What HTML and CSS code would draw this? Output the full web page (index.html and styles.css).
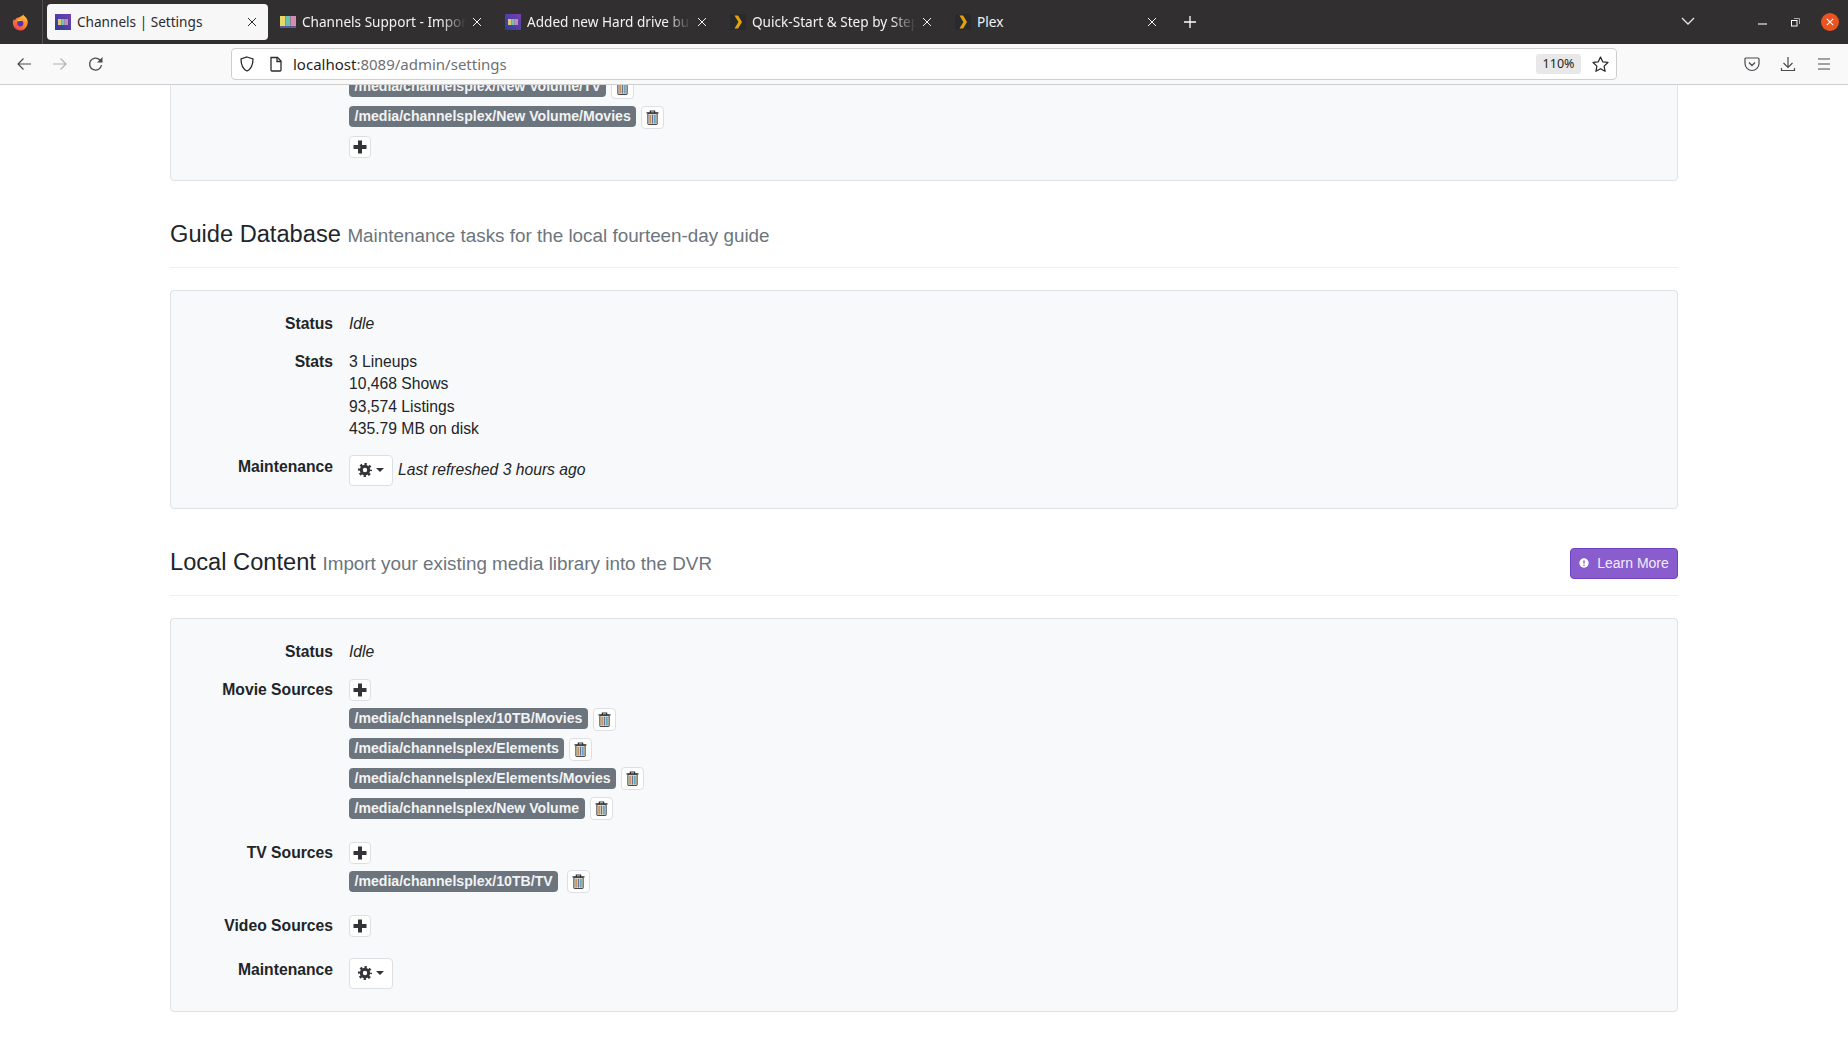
FILE: index.html
```html
<!DOCTYPE html>
<html lang="en">
<head>
<meta charset="utf-8">
<title>Channels | Settings</title>
<link rel="stylesheet" href="styles.css">
</head>
<body>
<svg class="defs" width="0" height="0" aria-hidden="true">
  <symbol id="i-x" viewBox="0 0 10 10"><path d="M1 1l8 8M9 1l-8 8" fill="none" stroke="currentColor" stroke-width="1"/></symbol>
  <symbol id="i-tv" viewBox="0 0 16 16"><rect x="0" y="2" width="16" height="12" fill="#2b2b2b"/><rect x="0" y="2" width="5.5" height="10" fill="#e8d86a"/><rect x="5.5" y="2" width="5" height="10" fill="#6cc0b0"/><rect x="10.5" y="2" width="5.5" height="10" fill="#d88ab0"/><rect x="0" y="12" width="16" height="2" fill="#5a5a9a"/></symbol>
  <symbol id="i-channels" viewBox="0 0 16 16"><defs><linearGradient id="g-ch" x1="0" y1="1" x2="1" y2="0"><stop offset="0" stop-color="#2a3f9a"/><stop offset="1" stop-color="#7a3fb0"/></linearGradient></defs><rect width="16" height="16" fill="url(#g-ch)"/><rect x="3" y="5" width="3.4" height="6" fill="#d8c878"/><rect x="6.4" y="5" width="3.2" height="6" fill="#7cc0b0"/><rect x="9.6" y="5" width="3.4" height="6" fill="#c88ab0"/></symbol>
  <symbol id="i-plex" viewBox="0 0 16 16"><rect width="16" height="16" fill="#282a2d"/><path d="M4.5 1.5h3.6L12 8l-3.9 6.500H4.500L8.400 8z" fill="#e5a00d"/></symbol>
  <symbol id="i-plus" viewBox="0 0 14 14"><path d="M7 .5v13M.5 7h13" fill="none" stroke="#33343a" stroke-width="4"/></symbol>
  <symbol id="i-trash" viewBox="0 0 14 16"><path d="M0.500 3h13M4.700 3V1h4.600v2" fill="none" stroke="#2f3036" stroke-width="1.300"/><path d="M2 3.600h10V15a.6.6 0 0 1-.6.600H2.600a.6.6 0 0 1-.6-.600z" fill="#e6e0cf" stroke="#2f3036" stroke-width="1"/><path d="M4.400 5v9.500" stroke="#c4864a" stroke-width="1.600"/><path d="M7 5v9.500" stroke="#66748e" stroke-width="1.600"/><path d="M9.600 5v9.500" stroke="#4f9cc4" stroke-width="1.600"/></symbol>
  <symbol id="i-gear" viewBox="0 0 14 14"><circle cx="7" cy="7" r="3.700" fill="none" stroke="#33343a" stroke-width="3"/><circle cx="7" cy="7" r="5.800" fill="none" stroke="#33343a" stroke-width="2.400" stroke-dasharray="2.300 2.250" stroke-dashoffset="1.150"/></symbol>
</svg>

<header class="tabbar">
  <div class="ff-box">
    <svg class="ff" viewBox="0 0 16 16" width="17" height="17"><defs><linearGradient id="g-ff" x1="0.800" y1="0" x2="0.200" y2="1"><stop offset="0" stop-color="#ffc83a"/><stop offset="0.550" stop-color="#ff7a2c"/><stop offset="1" stop-color="#ee3a5e"/></linearGradient></defs><path d="M10.500 .5c.6 1.400 2 2 3 3.300 1.500 2 1.700 4.800.7 7C13 13.700 10.800 15.500 8 15.500 3.800 15.500.8 12.300.8 8.500c0-1.500.4-3 1.200-4 0 1 .3 1.500.7 1.800C3.300 4.300 5 3.300 6.500 3.300 8 2.500 10 2 10.500.5z" fill="url(#g-ff)"/><circle cx="7.800" cy="8.800" r="2.900" fill="#5b2fb5"/><path d="M5 6c1.500-1 4-1 5 .5-1.500-.4-3-.3-3.700.4L5 6z" fill="#ffcf50"/></svg>
  </div>
  <div class="tab tab-active">
    <svg class="fav"><use href="#i-channels"/></svg><span class="tab-title">Channels | Settings</span><svg class="tab-x"><use href="#i-x"/></svg>
  </div>
  <div class="tab">
    <svg class="fav"><use href="#i-tv"/></svg><span class="tab-title tab-fade">Channels Support - Importing media</span><svg class="tab-x"><use href="#i-x"/></svg>
  </div>
  <div class="tab">
    <svg class="fav"><use href="#i-channels"/></svg><span class="tab-title tab-fade">Added new Hard drive but not showing</span><svg class="tab-x"><use href="#i-x"/></svg>
  </div>
  <div class="tab">
    <svg class="fav"><use href="#i-plex"/></svg><span class="tab-title tab-fade">Quick-Start &amp; Step by Step guide</span><svg class="tab-x"><use href="#i-x"/></svg>
  </div>
  <div class="tab">
    <svg class="fav"><use href="#i-plex"/></svg><span class="tab-title">Plex</span><svg class="tab-x"><use href="#i-x"/></svg>
  </div>
  <svg class="newtab" viewBox="0 0 14 14" width="14" height="14"><path d="M7 1v12M1 7h12" fill="none" stroke="#fff" stroke-width="1.300"/></svg>
  <div class="win-controls">
    <svg class="chev" viewBox="0 0 14 8" width="14" height="8"><path d="M1 1l6 6 6-6" fill="none" stroke="#e6e6e6" stroke-width="1.300"/></svg>
    <svg class="win-min" viewBox="0 0 10 2" width="9" height="2"><path d="M0 1h10" stroke="#fff" stroke-width="1.200"/></svg>
    <svg class="win-res" viewBox="0 0 9 9" width="9" height="9"><rect x=".5" y="2.500" width="5.500" height="5.500" fill="none" stroke="#fff"/><path d="M3 .5h5.500V6" fill="none" stroke="#aaa"/></svg>
    <span class="win-close"><svg viewBox="0 0 10 10" width="8" height="8"><path d="M1 1l8 8M9 1l-8 8" stroke="#fff" stroke-width="1.300"/></svg></span>
  </div>
</header>

<nav class="navbar">
  <svg class="nav-icon ni-back" viewBox="0 0 16 16"><path d="M15 8H2M7.500 2.500L2 8l5.500 5.500" fill="none" stroke="#4a4a4f" stroke-width="1.200"/></svg>
  <svg class="nav-icon ni-fwd" viewBox="0 0 16 16"><path d="M1 8h13M8.500 2.500L14 8l-5.500 5.500" fill="none" stroke="#b1b1b3" stroke-width="1.200"/></svg>
  <svg class="nav-icon ni-reload" viewBox="0 0 16 16"><path d="M13.500 9a6 6 0 1 1-1.700-5.200L14 6" fill="none" stroke="#4a4a4f" stroke-width="1.300"/><path d="M14.500 1v5.500H9z" fill="#4a4a4f"/></svg>
  <div class="urlbar">
    <svg class="url-shield" viewBox="0 0 16 16" width="16" height="16"><path d="M8 1l6 2c0 6-1.500 10-6 12C3.500 13 2 9 2 3z" fill="none" stroke="#2b2b2f" stroke-width="1.300"/></svg>
    <svg class="url-page" viewBox="0 0 14 16" width="14" height="16"><path d="M2 1.500h6.500l3.500 3.500v9a1 1 0 0 1-1 1H3a1 1 0 0 1-1-1z" fill="none" stroke="#2b2b2f" stroke-width="1.300"/><path d="M8 1.500V5.500h4" fill="none" stroke="#2b2b2f" stroke-width="1.300"/></svg>
    <span class="url-text">localhost<span class="url-dim">:8089/admin/settings</span></span>
    <span class="zoom-badge">110%</span>
    <svg class="url-star" viewBox="0 0 16 16" width="17" height="17"><path d="M8 1l2.100 4.500 4.900.6-3.600 3.400.9 4.900L8 12l-4.300 2.400.9-4.900L1 6.100l4.900-.6z" fill="none" stroke="#2b2b2f" stroke-width="1.200" stroke-linejoin="round"/></svg>
  </div>
  <svg class="nav-icon ni-pocket" viewBox="0 0 16 16"><path d="M2 2h12a1 1 0 0 1 1 1v4.500a7 7 0 0 1-14 0V3a1 1 0 0 1 1-1z" fill="none" stroke="#4a4a4f" stroke-width="1.200"/><path d="M5 6.500l3 3 3-3" fill="none" stroke="#4a4a4f" stroke-width="1.300"/></svg>
  <svg class="nav-icon ni-down" viewBox="0 0 16 16"><path d="M8 1v10M3.500 7L8 11.500 12.500 7M1.500 12v2.500h13V12" fill="none" stroke="#4a4a4f" stroke-width="1.200"/></svg>
  <svg class="nav-icon ni-menu" viewBox="0 0 16 16"><path d="M2 3h12M2 8h12M2 13h12" fill="none" stroke="#4a4a4f" stroke-width="1.200"/></svg>
</nav>

<main class="content">
  <div class="container">
    <section class="panel panel-clipped">
      <div class="row">
        <div class="label"></div>
        <div class="value">
          <div class="path-line"><span class="badge">/media/channelsplex/New Volume/TV</span><button class="icon-btn"><svg class="ic-trash"><use href="#i-trash"/></svg></button></div>
          <div class="path-line"><span class="badge">/media/channelsplex/New Volume/Movies</span><button class="icon-btn"><svg class="ic-trash"><use href="#i-trash"/></svg></button></div>
          <div class="plus-line plus-below"><button class="icon-btn btn-plus"><svg class="ic-plus"><use href="#i-plus"/></svg></button></div>
        </div>
      </div>
    </section>

    <header class="section-head">
      <h3 class="section-title">Guide Database <small class="section-sub">Maintenance tasks for the local fourteen-day guide</small></h3>
    </header>
    <section class="panel">
      <div class="row">
        <div class="label">Status</div>
        <div class="value"><em>Idle</em></div>
      </div>
      <div class="row">
        <div class="label">Stats</div>
        <div class="value">3 Lineups<br>10,468 Shows<br>93,574 Listings<br>435.79 MB on disk</div>
      </div>
      <div class="row row-maint">
        <div class="label">Maintenance</div>
        <div class="value maint-value">
          <button class="icon-btn btn-gear"><svg class="ic-gear"><use href="#i-gear"/></svg><span class="caret"></span></button>
          <em>Last refreshed 3 hours ago</em>
        </div>
      </div>
    </section>

    <header class="section-head">
      <h3 class="section-title">Local Content <small class="section-sub">Import your existing media library into the DVR</small></h3>
      <a class="btn-learn"><svg viewBox="0 0 10 10" width="10" height="10"><circle cx="5" cy="5" r="4.700" fill="#fff"/><path d="M5 2.500v3" stroke="#8a5dcf" stroke-width="1.500"/><circle cx="5" cy="7.200" r=".8" fill="#8a5dcf"/></svg>Learn More</a>
    </header>
    <section class="panel">
      <div class="row">
        <div class="label">Status</div>
        <div class="value"><em>Idle</em></div>
      </div>
      <div class="row row-source">
        <div class="label">Movie Sources</div>
        <div class="value">
          <div class="plus-line plus-line-tall"><button class="icon-btn btn-plus"><svg class="ic-plus"><use href="#i-plus"/></svg></button></div>
          <div class="path-line"><span class="badge">/media/channelsplex/10TB/Movies</span><button class="icon-btn"><svg class="ic-trash"><use href="#i-trash"/></svg></button></div>
          <div class="path-line"><span class="badge">/media/channelsplex/Elements</span><button class="icon-btn"><svg class="ic-trash"><use href="#i-trash"/></svg></button></div>
          <div class="path-line"><span class="badge">/media/channelsplex/Elements/Movies</span><button class="icon-btn"><svg class="ic-trash"><use href="#i-trash"/></svg></button></div>
          <div class="path-line"><span class="badge">/media/channelsplex/New Volume</span><button class="icon-btn"><svg class="ic-trash"><use href="#i-trash"/></svg></button></div>
        </div>
      </div>
      <div class="row row-source">
        <div class="label">TV Sources</div>
        <div class="value">
          <div class="plus-line"><button class="icon-btn btn-plus"><svg class="ic-plus"><use href="#i-plus"/></svg></button></div>
          <div class="path-line"><span class="badge">/media/channelsplex/10TB/TV</span><button class="icon-btn btn-wide-gap"><svg class="ic-trash"><use href="#i-trash"/></svg></button></div>
        </div>
      </div>
      <div class="row row-source">
        <div class="label">Video Sources</div>
        <div class="value">
          <div class="plus-line"><button class="icon-btn btn-plus"><svg class="ic-plus"><use href="#i-plus"/></svg></button></div>
        </div>
      </div>
      <div class="row row-maint">
        <div class="label">Maintenance</div>
        <div class="value maint-value">
          <button class="icon-btn btn-gear"><svg class="ic-gear"><use href="#i-gear"/></svg><span class="caret"></span></button>
        </div>
      </div>
    </section>
  </div>
</main>
</body>
</html>
```

FILE: styles.css
```css
* { box-sizing: border-box; }
html, body { margin: 0; height: 100%; }
body {
  display: flex;
  flex-direction: column;
  height: 100vh;
  overflow: hidden;
  background: #fff;
  color: #212529;
  font-family: "Liberation Sans", Arial, sans-serif;
  font-size: 15.7px;
  line-height: 22.4px;
}
.defs { position: absolute; }

/* Tab strip */
.tabbar {
  flex: 0 0 44px;
  display: flex;
  align-items: flex-start;
  background: #312f30;
  color: #f3f3f3;
  font-family: "Noto Sans", sans-serif;
  font-size: 13.6px;
}
.ff-box {
  width: 43px;
  height: 44px;
  display: flex;
  align-items: center;
  padding-left: 12px;
  border-right: 1px solid #525051;
}
.tab {
  flex: 0 0 221px;
  min-width: 0;
  height: 36px;
  margin: 4px 4px 0 0;
  padding: 0 9px 0 8px;
  display: flex;
  align-items: center;
}
.tab:nth-child(2) { margin-left: 4px; }
.tab-active {
  background: #f7f7f7;
  color: #2b2b2f;
  border-radius: 4px;
}
.fav { width: 16px; height: 16px; flex: none; margin-right: 6px; }
.tab-title { flex: 1; min-width: 0; white-space: nowrap; overflow: hidden; }
.tab-fade {
  -webkit-mask-image: linear-gradient(to right, #000 85%, transparent 100%);
  mask-image: linear-gradient(to right, #000 85%, transparent 100%);
}
.tab-x { width: 10px; height: 10px; flex: none; margin-left: 6px; margin-right: 2px; }
.newtab { margin: 15px 0 0 11px; }
.win-controls {
  margin-left: auto;
  height: 44px;
  display: flex;
  align-items: center;
  width: 167px;
}
.chev { margin-top: -2px; }
.win-min { margin-left: 63px; margin-top: 3px; }
.win-res { margin-left: 24px; }
.win-close {
  margin-left: 21px;
  width: 18px;
  height: 18px;
  border-radius: 50%;
  background: #e95420;
  display: flex;
  align-items: center;
  justify-content: center;
}

/* Navigation bar */
.navbar {
  flex: 0 0 41px;
  display: flex;
  align-items: center;
  background: #f9f9fa;
  border-bottom: 1px solid #cfcfd0;
  padding-left: 16px;
}
.nav-icon { width: 16px; height: 16px; flex: none; }
.ni-fwd { margin-left: 20px; }
.ni-reload { margin-left: 20px; }
.urlbar {
  flex: 0 0 1386px;
  height: 32px;
  margin-left: 127px;
  display: flex;
  align-items: center;
  padding: 0 7px 0 7px;
  background: #fff;
  border: 1px solid #cfcfd0;
  border-radius: 4px;
  font-family: "Noto Sans", sans-serif;
  font-size: 15px;
  color: #1f1f23;
}
.url-page { margin-left: 14px; }
.url-text { margin-left: 10px; white-space: nowrap; }
.url-dim { color: #6f6f73; }
.zoom-badge {
  margin-left: auto;
  width: 45px;
  height: 20px;
  background: #e8e8e9;
  border-radius: 3px;
  font-size: 12.5px;
  line-height: 20px;
  text-align: center;
}
.url-star { margin-left: 11px; }
.ni-pocket { margin-left: 127px; }
.ni-down { margin-left: 20px; }
.ni-menu { margin-left: 20px; }

/* Page */
.content { flex: 1; min-height: 0; overflow: hidden; }
.container { width: 1508px; margin-left: 170px; }
.panel {
  background: #f8f9fa;
  border: 1px solid #dee2e6;
  border-radius: 4px;
  padding: 22px 0 22px;
}
.panel-clipped { margin-top: -22px; padding-top: 8px; padding-bottom: 21.5px; }
.row { display: flex; margin-top: 16px; }
.row:first-child { margin-top: 0; }
.row-maint { margin-top: 14px; }
.row-source + .row-source { margin-top: 19px; }
.row-source + .row-maint { margin-top: 19px; }
.label {
  flex: 0 0 162px;
  text-align: right;
  font-weight: 700;
  color: #212529;
}
.value { margin-left: 16px; }
.row-maint .label { margin-top: 1px; }
.maint-value { display: flex; align-items: center; gap: 5px; }

.section-head {
  display: flex;
  align-items: center;
  justify-content: space-between;
  height: 31px;
  margin: 39px 0 22px;
  box-sizing: content-box;
  padding-bottom: 16px;
  border-bottom: 1px solid #eeeeee;
}
.section-title {
  margin: 0;
  font-size: 23.65px;
  font-weight: 400;
  line-height: 31px;
  color: #212529;
}
.section-sub { font-size: 18.85px; color: #6c757d; font-weight: 400; }

.btn-learn {
  width: 108px;
  height: 31px;
  display: flex;
  align-items: center;
  justify-content: center;
  gap: 8px;
  background: #8a5dcf;
  border: 1px solid #6f42c1;
  border-radius: 4px;
  color: #f2ecfb;
  font-size: 14px;
}

.path-line { height: 29.8px; display: flex; align-items: center; }
.plus-line { height: 24px; }
.plus-line-tall { height: 25px; }
.plus-below { height: auto; padding-top: 4px; }
.badge {
  height: 21px;
  padding: 0 5.500px;
  background: #6c757d;
  color: #f2f3f4;
  border-radius: 4px;
  font-size: 14.1px;
  font-weight: 700;
  line-height: 21px;
  white-space: nowrap;
}
.icon-btn {
  display: inline-flex;
  align-items: center;
  justify-content: center;
  width: 23px;
  height: 23px;
  margin: 1px 0 0 5px;
  padding: 0;
  background: #fff;
  border: 1px solid #dcdfe3;
  border-radius: 4px;
}
.btn-wide-gap { margin-left: 9px; }
.btn-plus { width: 22px; height: 22px; margin: 0; vertical-align: top; }
.ic-plus { width: 14px; height: 14px; }
.ic-trash { width: 13px; height: 15px; }
.btn-gear { width: 44px; height: 31px; margin: 0; gap: 4px; flex: none; }
.ic-gear { width: 14px; height: 14px; }
.caret {
  width: 0;
  height: 0;
  border-left: 4px solid transparent;
  border-right: 4px solid transparent;
  border-top: 4px solid #33343a;
}
```
